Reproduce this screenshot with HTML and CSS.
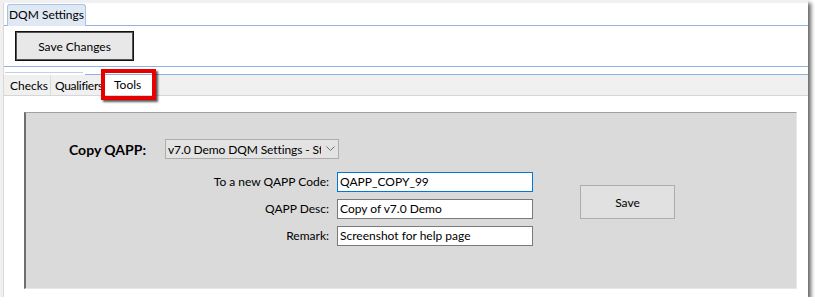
FILE: index.html
```html
<!DOCTYPE html>
<html lang="en">
<head>
    <meta charset="UTF-8">
    <title>DQM Settings - Tools</title>
    <link rel="stylesheet" href="styles.css">
</head>
<body>

<div class="window">
    <div class="frame">
        <div class="main-tabs">
            <div class="main-tab">DQM Settings</div>
        </div>

        <div class="toolbar">
            <button class="btn-default">Save Changes</button>
        </div>

        <div class="ghost">
            <div class="ghost-tab"></div>
            <div class="ghost-rest"></div>
        </div>

        <div class="sub-tabs">
            <div class="subtab">Checks</div>
            <div class="subtab narrow">Qualifiers</div>
            <div class="subtab selected">Tools</div>
            <div class="highlight"></div>
        </div>

        <div class="tab-body">
            <div class="panel">
                <div class="copy-row">
                    <div class="copy-label">Copy QAPP:</div>
                    <div class="combo">
                        <span class="combo-text">v7.0 Demo DQM Settings - Standard</span>
                        <svg class="combo-arrow" width="9" height="6" viewBox="0 0 9 6">
                            <polyline points="0.5,0.5 4.5,4.5 8.5,0.5" fill="none" stroke="#707070" stroke-width="1"/>
                        </svg>
                    </div>
                </div>

                <div class="form">
                    <div class="fields">
                        <label>To a new QAPP Code:</label>
                        <div class="field focused">QAPP_COPY_99</div>
                        <label>QAPP Desc:</label>
                        <div class="field">Copy of v7.0 Demo</div>
                        <label>Remark:</label>
                        <div class="field">Screenshot for help page</div>
                    </div>
                    <button class="btn-save">Save</button>
                </div>
            </div>
        </div>
    </div>
</div>

</body>
</html>
```

FILE: styles.css
```css
body {
    margin: 0;
    background: white;
    font-family: Lato, "Noto Sans", sans-serif;
    font-size: 12px;
    color: #000;
}
.window {
    width: 808px;
    height: 297px;
    box-sizing: border-box;
    background: white;
    border-top: 3px solid #f0f0f0;
    border-left: 3px solid #f0f0f0;
    box-shadow: 3px 3px 4px rgba(0, 0, 0, 0.6);
    overflow: hidden;
}
.frame {
    height: 100%;
    border-left: 1px solid #d9d9d9;
}

/* outer tab */
.main-tabs {
    display: flex;
    align-items: flex-end;
    height: 23px;
    box-sizing: border-box;
    border-bottom: 1px solid #8fb2e2;
}
.main-tab {
    margin-left: 3px;
    margin-bottom: -1px;
    width: 79px;
    height: 22px;
    box-sizing: border-box;
    border: 1px solid #a9c3e6;
    border-bottom: none;
    border-radius: 3px 3px 0 0;
    background: #dfe8f3;
    text-align: center;
    line-height: 20px;
    white-space: nowrap;
}

.toolbar {
    height: 41px;
    box-sizing: border-box;
    padding: 5px 0 0 11px;
    border-bottom: 1px solid #8fb2e2;
}
.btn-default {
    width: 119px;
    height: 30px;
    font: inherit;
    background: #e8e8e8;
    border: 1px solid #111;
    box-shadow: inset 0 0 0 1px #555;
    padding: 0;
}

.ghost {
    display: flex;
    height: 8px;
}
.ghost-tab {
    margin-left: 1px;
    width: 78px;
    height: 6px;
    box-sizing: border-box;
    border-bottom: 1px solid #c4d0de;
}
.ghost-rest {
    flex: 1;
    margin-left: 2px;
    height: 8px;
    box-sizing: border-box;
    border-bottom: 1px solid #8fb2e2;
}

/* inner tabs */
.sub-tabs {
    position: relative;
    display: flex;
    height: 21px;
    box-sizing: border-box;
    padding-left: 1px;
    background: #f0f0f0;
    border-bottom: 1px solid #d6d6d6;
}
.subtab {
    box-sizing: border-box;
    padding-left: 5px;
    line-height: 22px;
    border-right: 1px solid #dcdcdc;
    white-space: nowrap;
}
.subtab:nth-child(1) { width: 46px; }
.subtab.narrow {
    width: 54px;
    padding-left: 4px;
    letter-spacing: -0.3px;
}
.subtab.selected {
    width: 48px;
    background: white;
    padding-left: 9px;
    line-height: 19px;
    border-right: none;
}
.highlight {
    position: absolute;
    left: 97px;
    top: -6px;
    width: 55px;
    height: 31px;
    box-sizing: border-box;
    border: 4px solid #e60000;
    box-shadow: 2px 2px 2px rgba(0, 0, 0, 0.65);
}

.tab-body {
    padding: 16px 0 0 20px;
}
.panel {
    width: 773px;
    height: 177px;
    box-sizing: border-box;
    background: #dadada;
    border-top: 1px solid #a0a0a0;
    border-left: 2px solid #6e6e6e;
    border-right: 1px solid #e8e8e8;
    border-bottom: 1px solid #e8e8e8;
    padding: 26px 0 0 43px;
}

.copy-row {
    display: flex;
    align-items: center;
}
.copy-label {
    width: 96px;
    font-weight: bold;
    font-size: 14px;
}
.combo {
    display: flex;
    align-items: center;
    width: 174px;
    height: 20px;
    box-sizing: border-box;
    border: 1px solid #adadad;
    background: #e3e3e3;
    padding: 0 3px 0 2px;
}
.combo-text {
    flex: 1;
    white-space: nowrap;
    overflow: hidden;
    letter-spacing: -0.1px;
}
.combo-arrow {
    margin-left: 5px;
}

.form {
    display: flex;
    align-items: flex-start;
    margin: 13px 0 0 96px;
}
.fields {
    display: grid;
    grid-template-columns: 164px 196px;
    column-gap: 8px;
    row-gap: 7px;
    grid-auto-rows: 20px;
}
.fields label {
    text-align: right;
    line-height: 20px;
}
.field {
    box-sizing: border-box;
    border: 1px solid #7a7a7a;
    background: white;
    padding-left: 2px;
    line-height: 18px;
    white-space: nowrap;
    overflow: hidden;
}
.field.focused {
    border-color: #0078d7;
}
.btn-save {
    margin: 13px 0 0 47px;
    width: 95px;
    height: 34px;
    font: inherit;
    background: #e1e1e1;
    border: 1px solid #adadad;
    padding: 0;
}
```
